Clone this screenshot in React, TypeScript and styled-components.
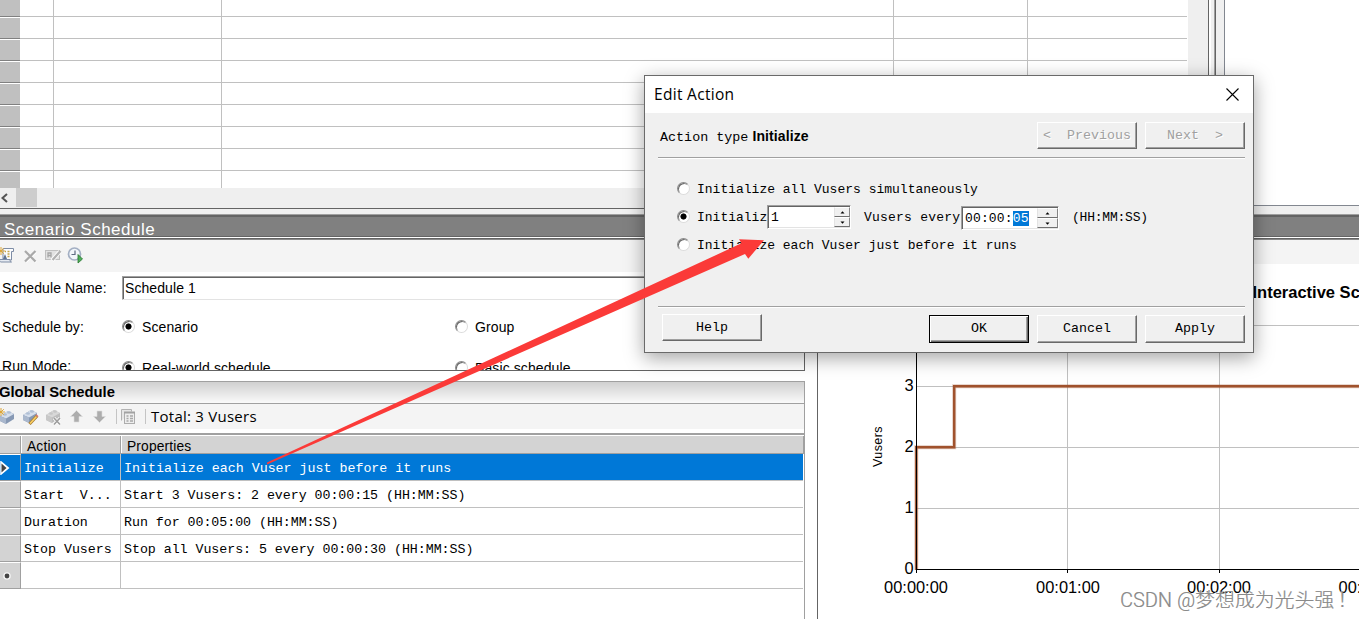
import React from "react";
import styled, { createGlobalStyle, css } from "styled-components";

const SANS = '"Liberation Sans", Arial, sans-serif';
const MONO = '"Liberation Mono", "Courier New", monospace';
const UI = '"Open Sans", "Segoe UI", sans-serif';

const GlobalStyle = createGlobalStyle`
  * { box-sizing: border-box; }
  body { margin: 0; background: #fff; overflow: hidden; color: #000; }
  svg { display: block; }
`;

const Screen = styled.main`
  position: relative;
  display: flex;
  flex-direction: column;
  width: 1359px;
  height: 619px;
  overflow: hidden;
  background: #fff;
  font-family: ${SANS};
  font-size: 14px;
`;

/* ---------- upper scripts grid ---------- */

const Upper = styled.div`
  display: flex;
  flex: none;
  height: 214px;
  background: #f0f0f0;
`;

const ScriptsPane = styled.section`
  display: flex;
  flex-direction: column;
  width: 1209px;
  height: 209px;
  border-right: 1px solid #646464;
  border-bottom: 1px solid #646464;
`;

const ScriptsBody = styled.div`
  display: flex;
  height: 188px;
`;

const ScriptsTable = styled.div`
  display: flex;
  flex-direction: column;
  width: 1188px;
  height: 188px;
  overflow: hidden;
  background: #fff;
  padding-right: 1px;
`;

const ScriptsRow = styled.div<{ $first?: boolean }>`
  display: grid;
  grid-template-columns: 20px 34px 168px 672px 134px 1fr;
  flex: none;
  height: ${(p) => (p.$first ? 17 : 22)}px;
`;

const ScriptsHead = styled.div<{ $first?: boolean }>`
  background: #c0c0c0;
  border-top: ${(p) => (p.$first ? "none" : "1px solid #fff")};
  border-bottom: 1px solid #808080;
`;

const ScriptsCell = styled.div<{ $last?: boolean }>`
  border-bottom: 1px solid #c0c0c0;
  border-right: ${(p) => (p.$last ? "none" : "1px solid #c0c0c0")};
`;

const VTrack = styled.div`
  flex: 1;
  background: #efefef;
`;

const HTrack = styled.div`
  display: flex;
  align-items: center;
  height: 20px;
  background: #efefef;
`;

const HThumb = styled.div`
  width: 21px;
  height: 19px;
  margin: 0 0 1px 8px;
  background: #cdcdcd;
`;

const VSplit = styled.div`
  display: flex;
  width: 15px;
  height: 214px;
`;

const VSplitLine = styled.div<{ $c: string; $w: number }>`
  width: ${(p) => p.$w}px;
  background: ${(p) => p.$c};
`;

const UpperRight = styled.div`
  flex: 1;
  height: 206px;
  background: #fff;
  border-left: 1px solid #828790;
  border-bottom: 1px solid #828790;
`;

/* ---------- lower area ---------- */

const Lower = styled.div`
  display: flex;
  flex: 1;
  min-height: 0;
`;

const LeftColumn = styled.div`
  display: flex;
  flex-direction: column;
  width: 805px;
`;

const Caption = styled.h2`
  display: flex;
  align-items: flex-end;
  flex: none;
  height: 24px;
  margin: 0;
  padding-left: 4px;
  overflow: hidden;
  background: #808080;
  border-top: 1px solid #a0a0a0;
  box-shadow: inset 0 2px #646464, inset 0 -1px #fff, inset 0 -2px #646464;
  color: #fff;
  font: 400 17px/19px ${SANS};
  letter-spacing: 0.5px;
`;

const CaptionText = styled.span`
  margin-bottom: -1px;
`;

const SchedulePanel = styled.section`
  display: flex;
  flex-direction: column;
  flex: none;
  height: 133px;
  overflow: hidden;
  border-right: 1px solid #646464;
  border-bottom: 1px solid #646464;
`;

const Toolbar = styled.div<{ $global?: boolean }>`
  display: flex;
  align-items: center;
  flex: none;
  gap: 5px;
  height: ${(p) => (p.$global ? 25 : 34)}px;
  margin-bottom: ${(p) => (p.$global ? 4 : 0)}px;
  background: #f4f4f4;
  ${(p) =>
    !p.$global &&
    css`
      border-top: 1px solid #646464;
      box-shadow: inset 0 1px #8a8a8a;
    `}
`;

const ToolIcon = styled.span`
  width: 18px;
  height: 18px;
  margin-left: -2px;
  margin-right: 2px;
`;

const ToolDivider = styled.i`
  width: 1px;
  height: 15px;
  margin: 0 -1px 0 1px;
  background: #c4c4c4;
`;

const ToolText = styled.span`
  margin: -2px 0 0 1px;
  font: 400 15px/20px ${UI};
  letter-spacing: 0.25px;
  white-space: pre;
`;

const FormRow = styled.div<{ $h: number }>`
  display: grid;
  grid-template-columns: 122px 333px 1fr;
  align-items: center;
  flex: none;
  height: ${(p) => p.$h}px;
`;

const FormLabel = styled.label`
  padding-left: 2px;
  letter-spacing: 0.08px;
  line-height: 16px;
`;

const NameField = styled.div`
  grid-column: 2 / 4;
  height: 24px;
  padding-left: 2px;
  background: #fff;
  border: 1px solid #a0a0a0;
  border-bottom-color: #e3e3e3;
  box-shadow: inset 1px 1px #646464;
  font-size: 14px;
  letter-spacing: 0.08px;
  line-height: 22px;
`;

const Choice = styled.label<{ $drop?: number }>`
  display: flex;
  align-items: center;
  gap: 7px;
  padding-top: ${(p) => p.$drop ?? 0}px;
  font-size: 14px;
  letter-spacing: 0.1px;
  line-height: 16px;
`;

const RadioDot = styled.i<{ $on?: boolean }>`
  flex: none;
  width: 13px;
  height: 13px;
  margin-bottom: 1px;
  border-radius: 50%;
  border: 1px solid;
  border-color: #8c8c8c #dcdcdc #dcdcdc #8c8c8c;
  background: ${(p) => (p.$on ? "radial-gradient(circle, #000 0 2.7px, #fff 3.4px)" : "#fff")};
  box-shadow: inset 1px 1px #696969;
`;

/* ---------- global schedule ---------- */

const GlobalPanel = styled.section`
  flex: 1;
  margin-top: 10px;
  border-top: 1px solid #a0a0a0;
  border-right: 1px solid #a0a0a0;
`;

const GlobalTitle = styled.h3`
  height: 22px;
  margin: 0 0 0 -1px;
  background: linear-gradient(#d0d0d0, #fafafa);
  border-bottom: 1px solid #a0a0a0;
  font: 700 14.8px/21px ${SANS};
`;

const ActionsTable = styled.div`
  border-top: 2px solid #a0a0a0;
  font-family: ${MONO};
  font-size: 13.3px;
`;

const ActionRow = styled.div<{ $kind?: "head" | "selected" }>`
  display: grid;
  grid-template-columns: 21px 100px 1fr;
  grid-template-rows: 100%;
  height: ${(p) => (p.$kind === "head" ? 19 : 27)}px;
  padding-right: ${(p) => (p.$kind === "head" ? 0 : 1)}px;
  color: ${(p) => (p.$kind === "selected" ? "#fff" : "#000")};
  ${(p) =>
    p.$kind === "head" &&
    css`
      background: #d3d3d3;
      border-top: 1px solid #fff;
      border-bottom: 1px solid #a0a0a0;
      font-family: ${SANS};
      font-size: 13.8px;
      overflow: hidden;
    `}
`;

const RowMarker = styled.div<{ $on?: boolean }>`
  display: flex;
  align-items: center;
  background: ${(p) => (p.$on ? "#0078d7" : "#d3d3d3")};
  border-top: 1px solid #fff;
  border-right: 1px solid #a0a0a0;
  border-bottom: 1px solid #a0a0a0;
`;

const ActionCell = styled.div<{ $on?: boolean; $last?: boolean }>`
  padding-left: 3px;
  background: ${(p) => (p.$on ? "#0078d7" : "#fff")};
  border-bottom: 1px solid #c0c0c0;
  border-right: ${(p) => (p.$last ? "none" : "1px solid #c0c0c0")};
  letter-spacing: ${(p) => (p.$last && !p.$on ? "-0.04px" : "0")};
  line-height: 29px;
  white-space: pre;
`;

const HeadCell = styled.div`
  padding-left: 6px;
  border-right: 1px solid #a0a0a0;
  box-shadow: 1px 0 #fff;
  letter-spacing: 0.15px;
  line-height: 21px;
`;

/* ---------- chart ---------- */

const Gutter = styled.div`
  width: 12px;
`;

const ChartColumn = styled.section`
  display: flex;
  flex-direction: column;
  flex: 1;
  min-width: 0;
`;

const ChartTools = styled.div`
  height: 26px;
  flex: none;
  background: #f4f4f4;
  border-top: 1px solid #646464;
  box-shadow: inset 0 1px #8a8a8a;
`;

const ChartBody = styled.div`
  flex: 1;
  border-left: 1px solid #646464;
  background: #fff;
`;

/* ---------- dialog ---------- */

const Dialog = styled.section`
  position: absolute;
  left: 644px;
  top: 75px;
  display: flex;
  flex-direction: column;
  width: 610px;
  height: 278px;
  border: 1px solid #6a6a6a;
  background: #f0f0f0;
  box-shadow: 0 5px 18px rgba(0, 0, 0, 0.36);
  font-family: ${MONO};
  font-size: 13px;
`;

const TitleBar = styled.header`
  display: flex;
  align-items: center;
  justify-content: space-between;
  height: 37px;
  padding: 0 14px 1px 9px;
  background: #fff;
  font: 400 15.5px/20px ${UI};
  letter-spacing: 0.3px;
`;

const DialogBody = styled.div`
  display: flex;
  flex-direction: column;
  flex: 1;
  padding: 0 8px 0 13px;
`;

const ActionTypeRow = styled.div`
  display: flex;
  gap: 8px;
  height: 44px;
  padding-top: 9px;
`;

const ActionType = styled.div`
  flex: 1;
  padding-left: 2px;
  font-size: 13.4px;
  line-height: 29px;
  white-space: pre;
`;

const ActionTypeValue = styled.b`
  margin-left: 4px;
  font: 700 14px/29px ${SANS};
  letter-spacing: 0.1px;
`;

const Rule = styled.div`
  height: 2px;
  border-top: 1px solid #a0a0a0;
  background: #fff;
`;

const Options = styled.div`
  height: 147px;
  padding: 16px 0 0 19px;
`;

const Option = styled.div`
  display: flex;
  align-items: center;
  height: 28px;
  white-space: pre;
`;

const OptionText = styled.span<{ $w?: number; $ml?: number; $track?: number }>`
  flex: none;
  width: ${(p) => (p.$w ? `${p.$w}px` : "auto")};
  margin-left: ${(p) => p.$ml ?? 7}px;
  letter-spacing: ${(p) => p.$track ?? 0}px;
`;

const SpinBox = styled.div<{ $w: number; $drop?: number }>`
  display: flex;
  flex: none;
  width: ${(p) => p.$w}px;
  height: 24px;
  margin-top: ${(p) => p.$drop ?? 0}px;
  padding: 1px 0 0 3px;
  background: #fff;
  border: 1px solid #a0a0a0;
  border-bottom-color: #fff;
  border-right-color: #fff;
  box-shadow: inset 1px 1px #646464, inset -1px -1px #e3e3e3;
  letter-spacing: 0.15px;
  line-height: 22px;
`;

const SpinValue = styled.span`
  flex: 1;
`;

const Selected = styled.span`
  display: inline-block;
  height: 15px;
  background: #0078d7;
  color: #fff;
  line-height: 16px;
`;

const SpinButtons = styled.div<{ $w: number }>`
  display: flex;
  flex-direction: column;
  width: ${(p) => p.$w}px;
  padding-bottom: 1px;
`;

const SpinButton = styled.i`
  display: flex;
  align-items: center;
  justify-content: center;
  flex: 1;
  background: #f0f0f0;
  border: 1px solid;
  border-color: #fff #858585 #707070 #e3e3e3;
`;

const Footer = styled.footer`
  display: flex;
  gap: 8px;
  padding: 7px 0 0 4px;
`;

const Push = styled.button<{ $default?: boolean; $raise?: boolean }>`
  width: 100px;
  height: ${(p) => (p.disabled || p.$raise ? 27 : 28)}px;
  margin: ${(p) => (p.$raise ? "-1px auto 0 0" : "0")};
  padding: 0;
  border: 1px solid;
  border-color: ${(p) => (p.$default ? "#000" : "#fff #696969 #696969 #fff")};
  border-radius: 0;
  background: #f0f0f0;
  box-shadow: ${(p) =>
    p.$default
      ? "inset 1px 1px #fff, inset -1px -1px #696969, inset -2px -2px #a0a0a0"
      : "inset -1px -1px #a0a0a0"};
  font: 400 13.3px/24px ${MONO};
  color: #000;
  white-space: pre;
  &:disabled {
    color: #a0a0a0;
    text-shadow: 1px 1px #fff;
  }
`;

const ArrowLayer = styled.svg`
  position: absolute;
  left: 0;
  top: 0;
  pointer-events: none;
`;

const Watermark = styled.div`
  position: absolute;
  left: 1120px;
  top: 587px;
  font: 400 19.8px/28px Roboto, "Noto Sans CJK SC", sans-serif;
  font-weight: 300;
  letter-spacing: 0.1px;
  color: #8a8a8a;
  text-shadow: -1px -1px rgba(255, 255, 255, 0.7), 0.4px 0 rgba(130, 130, 130, 0.6);
  white-space: nowrap;
`;

const Bang = styled.span`
  margin-left: 3px;
`;

/* ---------- icons ---------- */

const Spark = () => (
  <path d="M3 0v8M-1 4h8M0.2 1.2l5.6 5.6M5.8 1.2L0.2 6.8" stroke="#dba63a" strokeWidth="1" fill="none" />
);

const NewScheduleIcon = () => (
  <svg width="18" height="18">
    <path d="M5 1.500h10.500v3h-2V13H5z" fill="#fbfcfd" stroke="#7e8da6" />
    <path d="M1.500 12.500h10.500c0 2 .5 2.500 1.500 2.500H3c-1 0-1.500-1-1.500-2.500z" fill="#e6ebf2" stroke="#7e8da6" />
    <path d="M7 4.500h1M9.500 4.500h2M9.500 7h2M9.500 9.500h2" stroke="#c3a24a" strokeWidth="1.300" />
    <path d="M5 12l2-5 2 5z" fill="#5f7392" />
    <Spark />
  </svg>
);

const DeleteIcon = () => (
  <svg width="18" height="18">
    <path d="M5 5l10 10M15 5L5 15" stroke="#fff" strokeWidth="2.2" />
    <path d="M4 4l10.5 10.5M14.5 4L4 14.5" stroke="#a9a9a9" strokeWidth="2.2" />
  </svg>
);

const RenameIcon = () => (
  <svg width="18" height="18">
    <rect x="1.5" y="3.500" width="14" height="9" fill="#e2e2e2" stroke="#c0c0c0" />
    <path d="M4 10.500V6h3v4.500M4 8.500h3" stroke="#a6a6a6" fill="none" strokeWidth="1.300" />
    <path d="M8 13.500L16 4.500" stroke="#fff" strokeWidth="4" />
    <path d="M8.500 13L16.500 4" stroke="#b2b2b2" strokeWidth="2.300" />
  </svg>
);

const RunClockIcon = () => (
  <svg width="18" height="18">
    <circle cx="7.500" cy="7" r="6" fill="#f2f6fb" stroke="#a3afc3" strokeWidth="1.700" />
    <path d="M8 3.500V7.500H4.500" stroke="#5d6b82" fill="none" strokeWidth="1.200" />
    <path d="M11 7.500L15.500 12 11 16z" fill="#4fae5a" stroke="#26752f" strokeWidth=".8" />
  </svg>
);

const Brick = ({ muted = false }: { muted?: boolean }) => (
  <g>
    <path d="M1 8l8-5 6 3v5l-8 5-6-3z" fill={muted ? "#bdbdbd" : "#8799b4"} />
    <path d="M1 8l8-5 6 3-8 4.500z" fill={muted ? "#d8d8d8" : "#d6dfec"} />
    <path d="M1 8l6 2.500V16l-6-3z" fill={muted ? "#c8c8c8" : "#aab8cd"} />
    <ellipse cx="6" cy="6.500" rx="2" ry="1.200" fill={muted ? "#c6c6c6" : "#b1c0d5"} />
    <ellipse cx="10" cy="4.500" rx="2" ry="1.200" fill={muted ? "#c6c6c6" : "#b1c0d5"} />
  </g>
);

const AddActionIcon = () => (
  <svg width="18" height="18">
    <g transform="translate(1 0)">
      <Brick />
    </g>
    <Spark />
  </svg>
);

const EditActionIcon = () => (
  <svg width="18" height="18">
    <g transform="translate(1 -1)">
      <Brick />
    </g>
    <path d="M8.500 16L16 8" stroke="#a57a2c" strokeWidth="3" />
    <path d="M9 15.500L15.500 8.500" stroke="#f9cf66" strokeWidth="1.700" />
    <path d="M15 6.800l2 2" stroke="#d7776a" strokeWidth="1.600" />
  </svg>
);

const RemoveActionIcon = () => (
  <svg width="18" height="18">
    <g transform="translate(1 -1)">
      <Brick muted />
    </g>
    <path d="M10 10l6 6.500M16 10l-6 6.500" stroke="#fff" strokeWidth="3.300" />
    <path d="M10 10l6 6.500M16 10l-6 6.500" stroke="#9e9e9e" strokeWidth="1.700" />
  </svg>
);

const MoveIcon = ({ down = false }: { down?: boolean }) => (
  <svg width="18" height="18">
    <path
      d="M9.500 2.500l6 6h-3.500v5.500h-5V8.500H3.500z"
      fill="#adadad"
      stroke="#dedede"
      strokeWidth=".6"
      transform={down ? "rotate(180 9.5 8.500)" : undefined}
    />
  </svg>
);

const GroupsIcon = () => (
  <svg width="18" height="18">
    <path d="M2.500 12.500v-11h10v2" fill="#e6e6e6" stroke="#b2b2b2" />
    <rect x="5.500" y="4.500" width="10" height="11" fill="#eee" stroke="#adadad" />
    <path d="M5 4.500h11" stroke="#a2a2a2" strokeWidth="2" />
    <path d="M7.500 8h2M11 8h3M7.500 10.500h2M11 10.500h3M7.500 13h2M11 13h3" stroke="#a8a8a8" strokeWidth="1.300" />
  </svg>
);

const SpinArrow = ({ down = false }: { down?: boolean }) => (
  <svg width="5" height="3">
    <path d={down ? "M.5 0.500h4L2.500 2.800z" : "M.5 2.500h4L2.500 .2z"} fill="#000" />
  </svg>
);

const Spinner = ({ w }: { w: number }) => (
  <SpinButtons $w={w}>
    <SpinButton>
      <SpinArrow />
    </SpinButton>
    <SpinButton>
      <SpinArrow down />
    </SpinButton>
  </SpinButtons>
);

/* ---------- chart drawing: origin at the pane corner (818, 264) ---------- */

const Y_TICKS = [
  { label: "3", y: 386 },
  { label: "2", y: 447 },
  { label: "1", y: 508 },
  { label: "0", y: 569 },
];
const X_TICKS = [
  { label: "00:00:00", x: 916 },
  { label: "00:01:00", x: 1068 },
  { label: "00:02:00", x: 1219 },
  { label: "00:03:00", x: 1370.5 },
];

const Chart = () => (
  <svg width="541" height="355" viewBox="818 264 541 355" fontFamily={SANS}>
    <g stroke="#c0c0c0" shapeRendering="crispEdges">
      {[325, 386, 447, 508].map((y) => (
        <path key={y} d={`M917 ${y + 0.5}H1359`} />
      ))}
      <path d="M1067.500 325V569M1219.500 325V569" />
    </g>
    <path d="M916.300 570V447.200H954.200V386.200H1359" fill="none" stroke="#a0522d" strokeOpacity=".3" strokeWidth="4" />
    <path d="M916.300 570V447.200H954.200V386.200H1359" fill="none" stroke="#a0522d" strokeWidth="2.400" />
    <path
      d="M916.500 325V573M916 569.500H1359M1067.500 570V573M1219.500 570V573"
      stroke="#000"
      fill="none"
      shapeRendering="crispEdges"
    />
    {Y_TICKS.map((t) => (
      <text key={t.label} x="913.500" y={t.y + 5} fontSize="16.400" textAnchor="end">
        {t.label}
      </text>
    ))}
    {X_TICKS.map((t) => (
      <text key={t.label} x={t.x} y="593" fontSize="16.400" textAnchor="middle">
        {t.label}
      </text>
    ))}
    <text transform="translate(882 467) rotate(-90)" fontSize="12.500" letterSpacing=".4">
      Vusers
    </text>
    <text x="1252.500" y="298" fontSize="16.500" fontWeight="700">
      Interactive Schedule Graph
    </text>
  </svg>
);

const ACTIONS = [
  { name: "Initialize", text: "Initialize each Vuser just before it runs", on: true },
  { name: "Start  V...", text: "Start 3 Vusers: 2 every 00:00:15 (HH:MM:SS)" },
  { name: "Duration", text: "Run for 00:05:00 (HH:MM:SS)" },
  { name: "Stop Vusers", text: "Stop all Vusers: 5 every 00:00:30 (HH:MM:SS)" },
];

const EditActionDialog = () => (
  <Dialog>
    <TitleBar>
      Edit Action
      <svg width="13" height="13">
        <path d="M.5.5l12 12M12.500.5l-12 12" stroke="#000" strokeWidth="1.100" />
      </svg>
    </TitleBar>
    <DialogBody>
      <ActionTypeRow>
        <ActionType>
          Action type<ActionTypeValue>Initialize</ActionTypeValue>
        </ActionType>
        <Push disabled>{"<  Previous"}</Push>
        <Push disabled>{"Next  >"}</Push>
      </ActionTypeRow>
      <Rule />
      <Options>
        <Option>
          <RadioDot />
          <OptionText>Initialize all Vusers simultaneously</OptionText>
        </Option>
        <Option>
          <RadioDot $on />
          <OptionText $w={70}>Initializ</OptionText>
          <SpinBox $w={84}>
            <SpinValue>1</SpinValue>
            <Spinner w={16} />
          </SpinBox>
          <OptionText $ml={13} $w={97} $track={0.22}>
            Vusers every
          </OptionText>
          <SpinBox $w={98} $drop={2}>
            <SpinValue>
              00:00:<Selected>05</Selected>
            </SpinValue>
            <Spinner w={21} />
          </SpinBox>
          <OptionText $ml={13} $track={-0.22}>
            (HH:MM:SS)
          </OptionText>
        </Option>
        <Option>
          <RadioDot />
          <OptionText>Initialize each Vuser just before it runs</OptionText>
        </Option>
      </Options>
      <Rule />
      <Footer>
        <Push $raise>Help</Push>
        <Push $default>OK</Push>
        <Push>Cancel</Push>
        <Push>Apply</Push>
      </Footer>
    </DialogBody>
  </Dialog>
);

export default function App() {
  return (
    <Screen>
      <GlobalStyle />
      <Upper>
        <ScriptsPane>
          <ScriptsBody>
            <ScriptsTable>
              {Array.from({ length: 9 }, (_, i) => (
                <ScriptsRow key={i} $first={i === 0}>
                  <ScriptsHead $first={i === 0} />
                  <ScriptsCell />
                  <ScriptsCell />
                  <ScriptsCell />
                  <ScriptsCell />
                  <ScriptsCell $last />
                </ScriptsRow>
              ))}
            </ScriptsTable>
            <VTrack />
          </ScriptsBody>
          <HTrack>
            <svg width="8" height="10">
              <path d="M7 1L2.500 5 7 9" fill="none" stroke="#555" strokeWidth="2" />
            </svg>
            <HThumb />
          </HTrack>
        </ScriptsPane>
        <VSplit>
          <VSplitLine $c="#fff" $w={2} />
          <VSplitLine $c="#f0f0f0" $w={3} />
          <VSplitLine $c="#a0a0a0" $w={1} />
          <VSplitLine $c="#646464" $w={1} />
        </VSplit>
        <UpperRight />
      </Upper>
      <Lower>
        <LeftColumn>
          <Caption>
            <CaptionText>Scenario Schedule</CaptionText>
          </Caption>
          <SchedulePanel>
            <Toolbar>
              <ToolIcon>
                <NewScheduleIcon />
              </ToolIcon>
              <ToolIcon>
                <DeleteIcon />
              </ToolIcon>
              <ToolIcon>
                <RenameIcon />
              </ToolIcon>
              <ToolIcon>
                <RunClockIcon />
              </ToolIcon>
            </Toolbar>
            <FormRow $h={32}>
              <FormLabel>Schedule Name:</FormLabel>
              <NameField>Schedule 1</NameField>
            </FormRow>
            <FormRow $h={46}>
              <FormLabel>Schedule by:</FormLabel>
              <Choice>
                <RadioDot $on />
                Scenario
              </Choice>
              <Choice>
                <RadioDot />
                Group
              </Choice>
            </FormRow>
            <FormRow $h={32}>
              <FormLabel>Run Mode:</FormLabel>
              <Choice $drop={4}>
                <RadioDot $on />
                Real-world schedule
              </Choice>
              <Choice $drop={4}>
                <RadioDot />
                Basic schedule
              </Choice>
            </FormRow>
          </SchedulePanel>
          <GlobalPanel>
            <GlobalTitle>Global Schedule</GlobalTitle>
            <Toolbar $global>
              <ToolIcon>
                <AddActionIcon />
              </ToolIcon>
              <ToolIcon>
                <EditActionIcon />
              </ToolIcon>
              <ToolIcon>
                <RemoveActionIcon />
              </ToolIcon>
              <ToolIcon>
                <MoveIcon />
              </ToolIcon>
              <ToolIcon>
                <MoveIcon down />
              </ToolIcon>
              <ToolDivider />
              <ToolIcon>
                <GroupsIcon />
              </ToolIcon>
              <ToolDivider />
              <ToolText>Total: 3 Vusers</ToolText>
            </Toolbar>
            <ActionsTable>
              <ActionRow $kind="head">
                <HeadCell />
                <HeadCell>Action</HeadCell>
                <HeadCell>Properties</HeadCell>
              </ActionRow>
              {ACTIONS.map((a) => (
                <ActionRow key={a.name} $kind={a.on ? "selected" : undefined}>
                  <RowMarker $on={a.on}>
                    {a.on && (
                      <svg width="11" height="14">
                        <path d="M1.500 2L7.500 7l-6 5z" fill="#444" stroke="#fff" strokeWidth="2.500" />
                        <path d="M1.500 2.500L6.500 7l-5 4.500z" fill="#444" />
                      </svg>
                    )}
                  </RowMarker>
                  <ActionCell $on={a.on}>{a.name}</ActionCell>
                  <ActionCell $on={a.on} $last>
                    {a.text}
                  </ActionCell>
                </ActionRow>
              ))}
              <ActionRow>
                <RowMarker>
                  <svg width="14" height="10">
                    <circle cx="7" cy="5" r="3.800" fill="#f4f4f4" />
                    <circle cx="7" cy="5" r="2.400" fill="#444" />
                  </svg>
                </RowMarker>
                <ActionCell />
                <ActionCell $last />
              </ActionRow>
            </ActionsTable>
          </GlobalPanel>
        </LeftColumn>
        <Gutter />
        <ChartColumn>
          <Caption />
          <ChartTools />
          <ChartBody>
            <Chart />
          </ChartBody>
        </ChartColumn>
      </Lower>
      <EditActionDialog />
      <ArrowLayer width="1359" height="619">
        <path d="M267 462.500L741.500 243.300 739 239.300 764 240.200 748.300 258.700 745 254 267 464.500z" fill="#fb3a38" />
      </ArrowLayer>
      <Watermark>
        CSDN @梦想成为光头强<Bang>！</Bang>
      </Watermark>
    </Screen>
  );
}
